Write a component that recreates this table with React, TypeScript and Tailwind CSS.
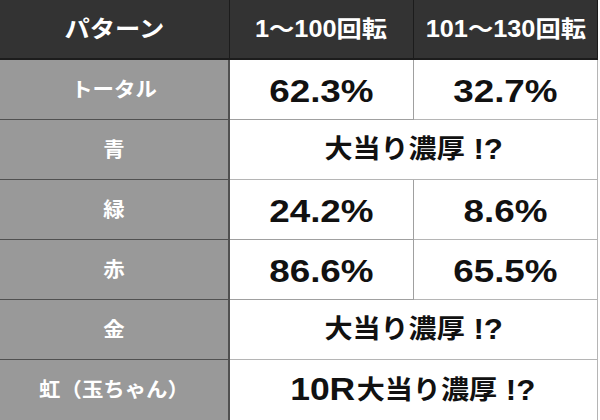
const jp = { fontFamily: '"Liberation Sans", "Noto Sans CJK JP", sans-serif' };

type Row = { label: string; a: string; b?: string; prefix?: string };

const rows: Row[] = [
  { label: "トータル", a: "62.3%", b: "32.7%" },
  { label: "青", a: "大当り濃厚" },
  { label: "緑", a: "24.2%", b: "8.6%" },
  { label: "赤", a: "86.6%", b: "65.5%" },
  { label: "金", a: "大当り濃厚" },
  { label: "虹（玉ちゃん）", a: "大当り濃厚", prefix: "10R" },
];

function Head({ children }: { children: React.ReactNode }) {
  return (
    <div className="h-[60px] bg-[#333333] border-b-2 border-r border-[#1c1c1c] flex items-center justify-center">
      <span className="inline-block scale-x-[1.1] text-white font-bold text-[23px]">{children}</span>
    </div>
  );
}

export default function App() {
  return (
    <div className="w-[600px] h-[420px] bg-white overflow-hidden" style={jp}>
      <div className="grid grid-cols-[230px_184px_184px]">
        {/* Header */}
        <Head>パターン</Head>
        <Head>1～100回転</Head>
        <Head>101～130回転</Head>

        {rows.map((r, i) => {
          const last = i === rows.length - 1;
          const isText = !r.b;
          return (
            <div key={r.label} className="contents">
              <div
                className={`h-[60px] bg-[#999999] border-r-2 border-[#505050] flex items-center justify-center ${last ? "" : "border-b"}`}
              >
                <span className="inline-block scale-x-[1.07] text-white font-bold text-[20px]">{r.label}</span>
              </div>
              {isText ? (
                <div
                  className={`col-span-2 h-[60px] border-r border-[#b5b5b5] flex items-center justify-center ${last ? "" : "border-b"}`}
                >
                  <span className="inline-block scale-x-[1.08] text-[#111] font-bold text-[26px] whitespace-nowrap">
                    {r.prefix && (
                      <span className="inline-block scale-x-[1.06] text-[31px] align-[-1px] mr-[3px]">{r.prefix}</span>
                    )}
                    {r.a}
                    <span className="text-[29px] ml-[8px] align-[-1px]">!?</span>
                  </span>
                </div>
              ) : (
                <>
                  <div
                    className={`h-[60px] border-r border-[#a0a0a0] flex items-center justify-center pt-[3px] ${last ? "" : "border-b"}`}
                  >
                    <span className="inline-block scale-x-[1.15] text-[#111] font-bold text-[32px]">{r.a}</span>
                  </div>
                  <div
                    className={`h-[60px] border-r border-[#b5b5b5] flex items-center justify-center pt-[3px] ${last ? "" : "border-b"}`}
                  >
                    <span className="inline-block scale-x-[1.15] text-[#111] font-bold text-[32px]">{r.b}</span>
                  </div>
                </>
              )}
            </div>
          );
        })}
      </div>
    </div>
  );
}
